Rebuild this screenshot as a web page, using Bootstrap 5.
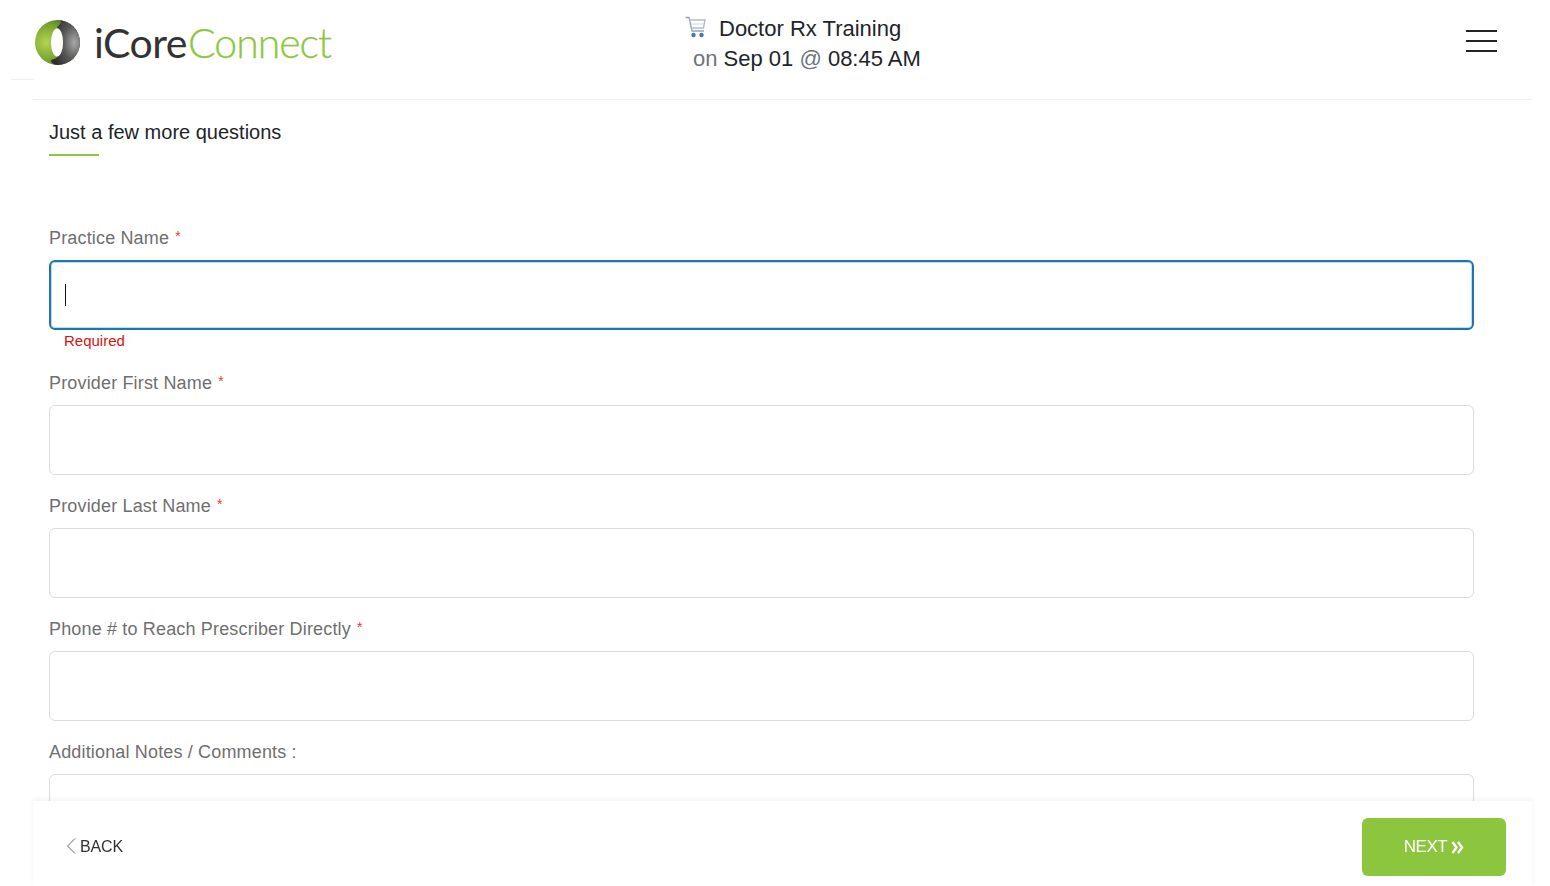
<!DOCTYPE html>
<html lang="en">
<head>
<meta charset="utf-8">
<title>iCoreConnect</title>
<link href="https://cdn.jsdelivr.net/npm/bootstrap@5.3.0/dist/css/bootstrap.min.css" rel="stylesheet">
<style>
html,body{height:100%;overflow:hidden;background:#fff;font-family:"Liberation Sans",Arial,sans-serif;color:#212529}
.page-shell{margin:0 18px 0 33px;position:relative}
.top-bar{height:100px;border-bottom:1px solid #eee;padding-right:35px}
.stub-line{position:absolute;left:-22px;top:79px;width:22px;height:1px;background:#eee}
.logo-box{width:300px;margin-left:1px;margin-top:-15px}
.logo-word{font-family:Lato,sans-serif;font-size:41px;line-height:1;letter-spacing:-.5px;margin-left:13px;margin-top:1px}
.logo-dark{color:#333;font-weight:400}
.logo-green{color:#8dc63f;font-weight:300;margin-left:1px;letter-spacing:-1px;-webkit-text-stroke:.25px #8dc63f}
.course-box{margin-left:351px;margin-top:-12px;font-size:22px;line-height:30px}
.course-when{padding-left:8px}
.muted-on{color:#6c757d}
.cart-icon{margin-right:12px;margin-top:-3px}
.menu-lines{width:31px;margin-top:-10px;margin-left:0}
.menu-lines span{display:block;height:2px;background:#212529;margin-bottom:8px}
.form-area{padding:19px 58px 0 16px}
.form-heading{font-size:20px;line-height:26px;color:#212529;margin:0}
.heading-rule{width:50px;height:2px;background:#8dc63f;margin-top:9px;margin-bottom:69px}
.field-label{display:block;font-size:18px;line-height:24px;color:#6f6f6f;padding-top:1px;margin-bottom:10px;letter-spacing:.16px}
.req-star{color:#e53935;font-size:14px;line-height:0;vertical-align:3px;margin-left:1px}
.field-input.form-control{height:70px;border:1px solid #dcdcdc;border-radius:6px;box-shadow:none}
.field-wrap{margin-bottom:18px}
.active-input.form-control{border:2px solid #1f74ad;box-shadow:0 0 0 1px #bcdcf0 inset;padding-left:14px}
.err-text{color:#d8140f;font-size:15px;line-height:20px;padding-left:15px;margin-top:1px}
.field-wrap.has-error{margin-bottom:19px}
.caret-mark{position:absolute;left:16px;top:24px;width:1px;height:22px;background:#111}
.foot-bar{position:fixed;left:33px;right:18px;bottom:0;height:85px;background:#fff;box-shadow:0 -2px 6px rgba(0,0,0,.05);padding:17px 26px 10px 33px}
.back-link{font-size:16px;color:#333;text-decoration:none;letter-spacing:-.15px;margin-top:17px}
.back-arrow{margin-right:2px;margin-top:-2px}
.next-btn.btn{width:144px;height:58px;background:#8cc63f;border:0;border-radius:6px;color:#fff;font-size:17px;letter-spacing:-.5px;padding:0}
</style>
</head>
<body>
<div class="page-shell">
  <header class="top-bar d-flex align-items-center position-relative">
    <span class="stub-line"></span>
    <div class="logo-box d-flex align-items-center">
      <svg width="47" height="47" viewBox="0 0 47 47" aria-label="logo">
        <defs>
          <radialGradient id="gr" cx=".25" cy=".5" r=".75"><stop offset="0" stop-color="#b2d450"/><stop offset=".55" stop-color="#76a32f"/><stop offset="1" stop-color="#2f5a10"/></radialGradient>
          <radialGradient id="gy" cx=".8" cy=".5" r=".75"><stop offset="0" stop-color="#a8a8a8"/><stop offset=".5" stop-color="#5a5a5a"/><stop offset="1" stop-color="#2e2e2e"/></radialGradient>
        </defs>
        <circle cx="23.5" cy="23.5" r="22.5" fill="url(#gr)"/>
        <path d="M23 8C30 3 26 1 23.500 1A22.500 22.500 0 0 1 23.500 46C19 46 17 43 17 41C24 40 29 33 29 23.500S27 11 23 8Z" fill="url(#gy)"/>
        <ellipse cx="23" cy="23.500" rx="6" ry="14" fill="#fff"/>
      </svg>
      <div class="logo-word"><span class="logo-dark">iCore</span><span class="logo-green">Connect</span></div>
    </div>
    <div class="course-box flex-grow-1">
      <div class="d-flex align-items-center">
        <svg class="cart-icon" width="22" height="22" viewBox="0 0 22 22" fill="none" aria-label="cart">
          <path d="M.5 1.500h3.500l3 13.500h12" stroke="#9aa3b8" stroke-width="1.400"/>
          <path d="M4.500 4h15.500l-1.500 8H6.500" stroke="#b4bccb" stroke-width="1.400"/>
          <path d="M6 8h12.500" stroke="#d0d5de"/>
          <circle cx="8.500" cy="19" r="2.200" fill="#3f78b8"/><circle cx="16.500" cy="19" r="2.200" fill="#3f78b8"/>
        </svg>
        <span>Doctor Rx Training</span>
      </div>
      <div class="course-when"><span class="muted-on">on</span> Sep 01 <span class="muted-on">@</span> 08:45 AM</div>
    </div>
    <div class="menu-lines"><span></span><span></span><span></span></div>
  </header>
  <main class="form-area">
    <h1 class="form-heading">Just a few more questions</h1>
    <div class="heading-rule"></div>
    <form>
      <div class="field-wrap has-error">
        <label class="field-label">Practice Name <span class="req-star">*</span></label>
        <div class="position-relative">
          <input class="form-control field-input active-input" type="text">
          <span class="caret-mark"></span>
        </div>
        <div class="err-text">Required</div>
      </div>
      <div class="field-wrap">
        <label class="field-label">Provider First Name <span class="req-star">*</span></label>
        <input class="form-control field-input" type="text">
      </div>
      <div class="field-wrap">
        <label class="field-label">Provider Last Name <span class="req-star">*</span></label>
        <input class="form-control field-input" type="text">
      </div>
      <div class="field-wrap">
        <label class="field-label">Phone # to Reach Prescriber Directly <span class="req-star">*</span></label>
        <input class="form-control field-input" type="text">
      </div>
      <div class="field-wrap">
        <label class="field-label">Additional Notes / Comments :</label>
        <input class="form-control field-input" type="text">
      </div>
    </form>
  </main>
</div>
<footer class="foot-bar d-flex justify-content-between align-items-start">
  <a class="back-link d-flex align-items-center" href="#">
    <svg class="back-arrow" width="12" height="16" viewBox="0 0 12 16" fill="none" aria-hidden="true"><path d="M9 .5 1.500 8 9 15.500" stroke="#666" stroke-width="1"/></svg>BACK
  </a>
  <button class="btn next-btn d-flex align-items-center justify-content-center" type="button">NEXT<svg width="13" height="13" viewBox="0 0 13 13" fill="none" class="ms-1"><path d="M1.500 1l4 5.500-4 5.500M7 1l4 5.500-4 5.500" stroke="#fff" stroke-width="2.400"/></svg></button>
</footer>
<script src="https://cdn.jsdelivr.net/npm/bootstrap@5.3.0/dist/js/bootstrap.bundle.min.js"></script>
</body>
</html>
